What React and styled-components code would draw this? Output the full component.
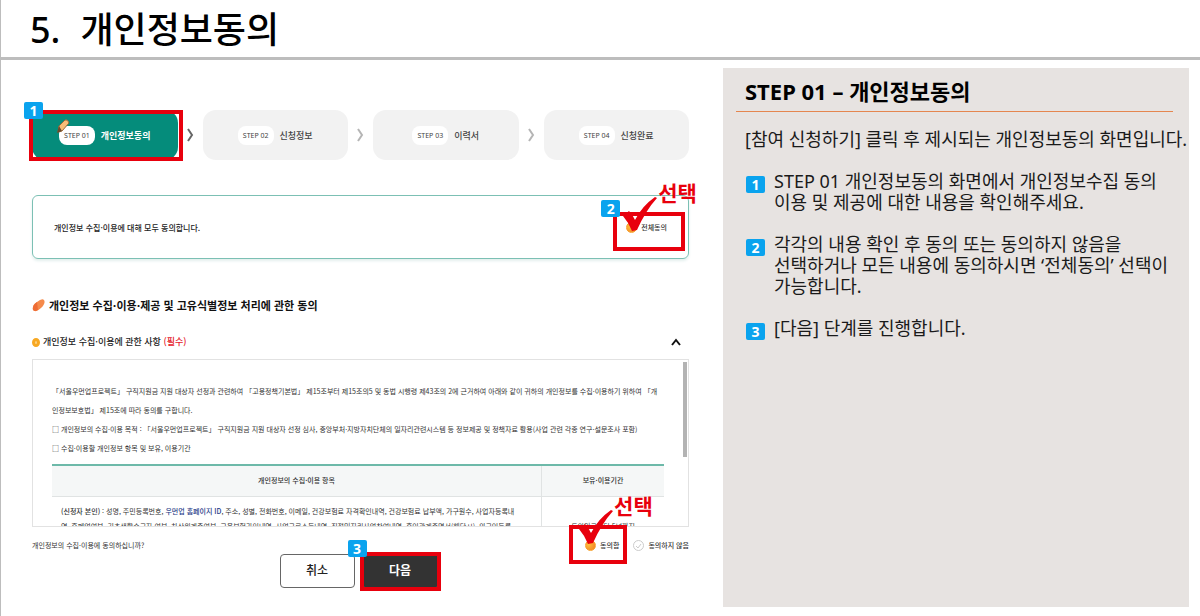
import React, { useState } from "react";
import styled, { createGlobalStyle, css } from "styled-components";

const GlobalStyle = createGlobalStyle`
    * {
        box-sizing: border-box;
    }

    body {
        margin: 0;
        background: #fff;
        color: #111;
        font-family: "Noto Sans CJK KR", "Noto Sans", sans-serif;
    }
`;

const Page = styled.div`
    min-height: 100vh;
    border-left: 1px solid #bdbdbd;
`;

const PageHeader = styled.header`
    height: 60px;
    padding: 2px 29px 0;
    border-bottom: 3px solid #bdbdbd;
`;

const PageTitle = styled.h1`
    display: flex;
    gap: 20px;
    margin: 0;
    font-family: "Noto Sans", "Noto Sans CJK KR", sans-serif;
    font-size: 36px;
    font-weight: 500;
    line-height: 56px;
    color: #000;
`;

const Main = styled.main`
    display: grid;
    grid-template-columns: 657fr 466fr;
    gap: 34px;
    padding: 8px 11px 8px 31px;
`;

const FormColumn = styled.form`
    padding-top: 42px;
`;

/* Numbered markers and red frames drawn over the controls */

const Badge = styled.span`
    display: block;
    flex: none;
    width: 19px;
    height: 17px;
    border-radius: 2px;
    background: #0aa3ee;
    color: #fff;
    font-family: "Noto Sans", sans-serif;
    font-size: 14px;
    font-weight: 700;
    line-height: 17px;
    text-align: center;
`;

const Marked = styled.div`
    position: relative;
    flex: ${({ $grow }) => ($grow ? "1" : "none")};
`;

const Frame = styled.div`
    position: absolute;
    inset: ${({ $inset }) => $inset};
    border: 4px solid #e8000d;
    pointer-events: none;
`;

const FrameBadge = styled(Badge)`
    position: absolute;
    top: ${({ $top }) => $top || "-16px"};
    left: ${({ $left }) => $left || "-16px"};
`;

const Tick = styled.svg`
    position: absolute;
    top: -20px;
    left: 4px;
    width: 38px;
    height: 38px;
`;

const PickText = styled.span`
    position: absolute;
    top: -36px;
    left: 41px;
    color: #e8000d;
    font-size: 21px;
    font-weight: 700;
    line-height: 24px;
    white-space: nowrap;
`;

const Steps = styled.ol`
    display: flex;
    margin: 0 0 35px;
    padding: 0;
    list-style: none;
`;

const StepItem = styled.li`
    display: flex;
    flex: ${({ $last }) => ($last ? "1 1 0" : "1 1 25px")};
    align-items: center;
`;

const Step = styled.div`
    display: flex;
    align-items: center;
    justify-content: center;
    gap: 6px;
    height: 50px;
    border-radius: 13px;
    background: ${({ $active }) => ($active ? "#058c7b" : "#f2f2f2")};
    color: ${({ $active }) => ($active ? "#fff" : "#444")};
    font-size: 9px;
    font-weight: ${({ $active }) => ($active ? 700 : 500)};
`;

const StepTag = styled.span`
    position: relative;
    padding: 0 5px;
    border-radius: 8px;
    background: #fff;
    color: #444;
    font-family: "Noto Sans", sans-serif;
    font-size: 7px;
    font-weight: 400;
    line-height: 19px;
`;

const Pencil = styled.svg`
    position: absolute;
    top: -8px;
    left: -3px;
    width: 14px;
    height: 16px;
`;

const StepArrow = styled.svg`
    flex: none;
    width: 25px;
    height: 14px;
    color: ${({ $active }) => ($active ? "#666" : "#b5b5b5")};
`;

const AgreeAll = styled.section`
    display: flex;
    align-items: center;
    justify-content: space-between;
    height: 64px;
    padding: 0 21px;
    border: 1px solid #7cc0b4;
    border-radius: 6px;
    box-shadow: 0 2px 3px #e3efed;
    color: #222;
    font-size: 8px;
    font-weight: 500;
`;

const ChoiceLabel = styled.label`
    display: flex;
    align-items: center;
    gap: 4px;
    color: #333;
    font-size: 7px;
    font-weight: 500;
    line-height: 18px;
    white-space: nowrap;
`;

const mark = css`
    appearance: none;
    width: 11px;
    height: 11px;
    margin: 0;
    border: 1px solid #ccc;
    border-radius: 50%;
    background: #fff;

    &:checked {
        border-color: #f7a12c;
        background: radial-gradient(circle at 30% 40%, #ffbe3c, #f07b22);
    }
`;

const CheckBox = styled.input.attrs({ type: "checkbox" })`
    ${mark}
`;

const Radio = styled.input.attrs({ type: "radio" })`
    ${mark}
`;

const RadioWrap = styled.span`
    position: relative;
    display: flex;
`;

const RadioTick = styled.svg`
    position: absolute;
    inset: 0;
    width: 11px;
    height: 11px;
    pointer-events: none;
`;

const SectionTitle = styled.h2`
    display: flex;
    align-items: center;
    gap: 4px;
    margin: 36px 0 0;
    font-size: 11px;
    font-weight: 700;
    line-height: 20px;
`;

const TitleMark = styled.svg`
    width: 13px;
    height: 13px;
`;

const TermsHeader = styled.div`
    display: flex;
    align-items: center;
    justify-content: space-between;
    height: 44px;
    padding: 10px 7px 0 0;
`;

const TermsTitle = styled.h3`
    display: flex;
    align-items: center;
    gap: 3px;
    margin: 0;
    color: #222;
    font-size: 9px;
    font-weight: 500;
    line-height: 18px;
`;

const Ring = styled.span`
    width: 8px;
    height: 9px;
    border: 3px solid #f7a823;
    border-radius: 50%;
    background: #fcd281;
`;

const Required = styled.span`
    color: #e5202b;
`;

const ToggleButton = styled.button`
    display: flex;
    padding: 0;
    border: 0;
    background: none;
    color: #111;
`;

const Terms = styled.div`
    display: flex;
    justify-content: space-between;
    height: 168px;
    overflow: hidden;
    border: 1px solid #e2e2e2;
`;

const TermsBody = styled.div`
    flex: 1;
    padding: 22px 19px 0 19px;
    color: #333;
    font-size: 7px;
    line-height: 19px;
`;

const TermsText = styled.p`
    margin: 0;
    word-break: break-all;
`;

const ScrollThumb = styled.div`
    width: 4px;
    height: 95px;
    margin: 2px 1px 0 0;
    background: #b3b3b3;
`;

const TermsTable = styled.table`
    width: 100%;
    margin-top: 6px;
    border-collapse: collapse;
    border-top: 2px solid #6db9a9;
    table-layout: fixed;
    line-height: 15px;

    th {
        height: 31px;
        padding: 0;
        background: #f5f7f7;
        border-bottom: 1px solid #e0e3e3;
        color: #333;
        font-weight: 500;
    }

    th:first-child {
        width: 80%;
    }

    td {
        padding: 7px 9px;
        vertical-align: top;
        word-break: break-all;
    }

    td + td {
        padding-top: 22px;
        text-align: center;
    }

    th + th,
    td + td {
        border-left: 1px solid #e0e3e3;
    }

    b {
        font-weight: 500;
    }
`;

const IdText = styled.b`
    color: #1f3c88;
`;

const AgreeRow = styled.div`
    display: flex;
    justify-content: space-between;
    height: 27px;
    padding-top: 9px;
    color: #333;
    font-size: 7px;
    line-height: 18px;
`;

const Choices = styled.div`
    display: flex;
    gap: 14px;
`;

const Actions = styled.div`
    display: flex;
    justify-content: center;
    gap: 8px;
    padding-right: 4px;
`;

const ActionButton = styled.button`
    display: block;
    width: 75px;
    height: 34px;
    padding: 0 0 3px;
    border: 1px solid ${({ $primary }) => ($primary ? "#333" : "#666")};
    border-radius: 4px;
    background: ${({ $primary }) => ($primary ? "#333" : "#fff")};
    color: ${({ $primary }) => ($primary ? "#fff" : "#222")};
    font-family: inherit;
    font-size: 12px;
    font-weight: ${({ $primary }) => ($primary ? 700 : 500)};
`;

const Guide = styled.aside`
    min-height: 539px;
    padding: 4px 0 0 13px;
    background: #e7e3e1;
    color: #1a1a1a;
    font-family: "Noto Sans", "Noto Sans CJK KR", sans-serif;
    font-size: 18px;
    line-height: 21px;
`;

const GuideTitle = styled.h2`
    margin: 0 16px 0 0;
    padding-left: 9px;
    border-bottom: 1px solid #e5864f;
    color: #000;
    font-size: 22px;
    font-weight: 700;
    line-height: 39px;
`;

const GuideIntro = styled.p`
    margin: 17px 0 21px;
    padding-left: 9px;
    white-space: nowrap;
`;

const GuideList = styled.ol`
    display: grid;
    gap: 21px;
    margin: 0;
    padding: 0 0 0 10px;
    list-style: none;
`;

const GuideItem = styled.li`
    display: flex;
    gap: 9px;

    ${Badge} {
        margin-top: 5px;
    }
`;

const steps = [
    { tag: "STEP 01", name: "개인정보동의", active: true },
    { tag: "STEP 02", name: "신청정보" },
    { tag: "STEP 03", name: "이력서" },
    { tag: "STEP 04", name: "신청완료" }
];

const guides = [
    ["STEP 01 개인정보동의 화면에서 개인정보수집 동의", "이용 및 제공에 대한 내용을 확인해주세요."],
    ["각각의 내용 확인 후 동의 또는 동의하지 않음을", "선택하거나 모든 내용에 동의하시면 ‘전체동의’ 선택이", "가능합니다."],
    ["[다음] 단계를 진행합니다."]
];

const PickMark = () => (
    <>
        <Tick viewBox="0 0 38 38" aria-hidden="true">
            <path d="M2 20 L8 15 Q12 19 14 24 Q21 10 34 1 L36 2 Q25 14 16 34 L11 35 Q8 27 2 20Z" fill="#e8000d" />
        </Tick>
        <PickText>선택</PickText>
    </>
);

const StepBox = ({ step }) => (
    <Step $active={step.active}>
        <StepTag>
            {step.active ? (
                <Pencil viewBox="0 0 14 16" aria-hidden="true">
                    <path d="M3 8 L9 2 Q12 1 13 5 L6 13 L2 14Z" fill="#f8bd77" stroke="#9a6a3a" />
                    <path d="M3 8 L6 13 L1 15Z" fill="#6b4a2c" />
                </Pencil>
            ) : null}
            {step.tag}
        </StepTag>
        {step.name}
    </Step>
);

const App = () => {
    const [all, setAll] = useState(true);
    const [agree, setAgree] = useState("yes");

    const onAll = (e) => {
        setAll(e.target.checked);
        if (e.target.checked) setAgree("yes");
    };

    const onAgree = (e) => {
        setAgree(e.target.value);
        setAll(e.target.value === "yes");
    };

    return (
        <Page lang="ko">
            <GlobalStyle />
            <PageHeader>
                <PageTitle>
                    <span>5.</span>
                    <span>개인정보동의</span>
                </PageTitle>
            </PageHeader>
            <Main>
                <FormColumn onSubmit={(e) => e.preventDefault()}>
                    <Steps>
                        {steps.map((step, i) => (
                            <StepItem key={step.tag} $last={i === steps.length - 1}>
                                <Marked $grow>
                                    <StepBox step={step} />
                                    {step.active ? (
                                        <Frame $inset="0 -5px -1px -3px">
                                            <FrameBadge $top="-12px" $left="-9px">
                                                1
                                            </FrameBadge>
                                        </Frame>
                                    ) : null}
                                </Marked>
                                {i < steps.length - 1 ? (
                                    <StepArrow $active={step.active} viewBox="0 0 25 14" aria-hidden="true">
                                        <path d="M10 1 L14 7 L10 13" fill="none" stroke="currentColor" strokeWidth="2" />
                                    </StepArrow>
                                ) : null}
                            </StepItem>
                        ))}
                    </Steps>

                    <AgreeAll>
                        <span>개인정보 수집·이용에 대해 모두 동의합니다.</span>
                        <Marked>
                            <ChoiceLabel>
                                <CheckBox checked={all} onChange={onAll} />
                                전체동의
                            </ChoiceLabel>
                            <Frame $inset="-6px -18px -15px -13px">
                                <FrameBadge>2</FrameBadge>
                                <PickMark />
                            </Frame>
                        </Marked>
                    </AgreeAll>

                    <SectionTitle>
                        <TitleMark viewBox="0 0 13 13" aria-hidden="true">
                            <path d="M1 11 Q0 6 5 3 Q10 -1 12 1 Q14 4 9 9 Q4 14 1 11Z" fill="#f58a4b" />
                            <path d="M1 11 Q0 6 5 3 L6 11 Q3 13 1 11Z" fill="#ee6c35" />
                        </TitleMark>
                        개인정보 수집·이용·제공 및 고유식별정보 처리에 관한 동의
                    </SectionTitle>
                    <TermsHeader>
                        <TermsTitle>
                            <Ring />
                            <span>
                                개인정보 수집·이용에 관한 사항 <Required>(필수)</Required>
                            </span>
                        </TermsTitle>
                        <ToggleButton type="button" aria-label="접기">
                            <svg width="12" height="10" viewBox="0 0 12 10">
                                <path d="M2 8 L6 3 L10 8" fill="none" stroke="currentColor" strokeWidth="2" />
                            </svg>
                        </ToggleButton>
                    </TermsHeader>
                    <Terms>
                        <TermsBody>
                            <TermsText>
                                「서울우먼업프로젝트」 구직지원금 지원 대상자 선정과 관련하여 「고용정책기본법」 제15조부터 제15조의5 및 동법 시행령
                                제43조의 2에 근거하여 아래와 같이 귀하의 개인정보를 수집·이용하기 위하여 「개
                                <br />
                                인정보보호법」 제15조에 따라 동의를 구합니다.
                            </TermsText>
                            <TermsText>
                                □ 개인정보의 수집·이용 목적 : 「서울우먼업프로젝트」 구직지원금 지원 대상자 선정 심사, 중앙부처·지방자치단체의
                                일자리관련시스템 등 정보제공 및 정책자료 활용(사업 관련 각종 연구·설문조사 포함)
                            </TermsText>
                            <TermsText>□ 수집·이용할 개인정보 항목 및 보유, 이용기간</TermsText>
                            <TermsTable>
                                <thead>
                                    <tr>
                                        <th>개인정보의 수집·이용 항목</th>
                                        <th>보유·이용기간</th>
                                    </tr>
                                </thead>
                                <tbody>
                                    <tr>
                                        <td>
                                            <b>(신청자 본인)</b> : 성명, 주민등록번호, <IdText>우먼업 홈페이지 ID</IdText>, 주소, 성별, 전화번호,
                                            이메일, 건강보험료 자격확인내역, 건강보험료 납부액, 가구원수, 사업자등록내
                                            <br />
                                            역, 휴폐업여부, 기초생활수급자 여부, 차상위계층여부, 고용보험가입내역, 사업근로소득내역,
                                            직접일자리사업참여내역, 혼인관계증명서(해당시), 외국인등록
                                        </td>
                                        <td>동의일로부터 5년까지</td>
                                    </tr>
                                </tbody>
                            </TermsTable>
                        </TermsBody>
                        <ScrollThumb />
                    </Terms>
                    <AgreeRow>
                        <span>개인정보의 수집·이용에 동의하십니까?</span>
                        <Choices>
                            <Marked>
                                <ChoiceLabel>
                                    <Radio name="agree" value="yes" checked={agree === "yes"} onChange={onAgree} />
                                    동의함
                                </ChoiceLabel>
                                <Frame $inset="-11px -8px -10px -16px">
                                    <PickMark />
                                </Frame>
                            </Marked>
                            <ChoiceLabel>
                                <RadioWrap>
                                    <Radio name="agree" value="no" checked={agree === "no"} onChange={onAgree} />
                                    <RadioTick viewBox="0 0 11 11" aria-hidden="true">
                                        <path d="M3 6 L5 8 L8 4" fill="none" stroke="#ccc" />
                                    </RadioTick>
                                </RadioWrap>
                                동의하지 않음
                            </ChoiceLabel>
                        </Choices>
                    </AgreeRow>
                    <Actions>
                        <ActionButton type="button">취소</ActionButton>
                        <Marked>
                            <ActionButton type="submit" $primary>
                                다음
                            </ActionButton>
                            <Frame $inset="-2px -3px -3px -3px">
                                <FrameBadge>3</FrameBadge>
                            </Frame>
                        </Marked>
                    </Actions>
                </FormColumn>

                <Guide>
                    <GuideTitle>STEP 01 – 개인정보동의</GuideTitle>
                    <GuideIntro>[참여 신청하기] 클릭 후 제시되는 개인정보동의 화면입니다.</GuideIntro>
                    <GuideList>
                        {guides.map((lines, i) => (
                            <GuideItem key={lines[0]}>
                                <Badge>{i + 1}</Badge>
                                <div>
                                    {lines.map((line) => (
                                        <div key={line}>{line}</div>
                                    ))}
                                </div>
                            </GuideItem>
                        ))}
                    </GuideList>
                </Guide>
            </Main>
        </Page>
    );
};

export default App;
